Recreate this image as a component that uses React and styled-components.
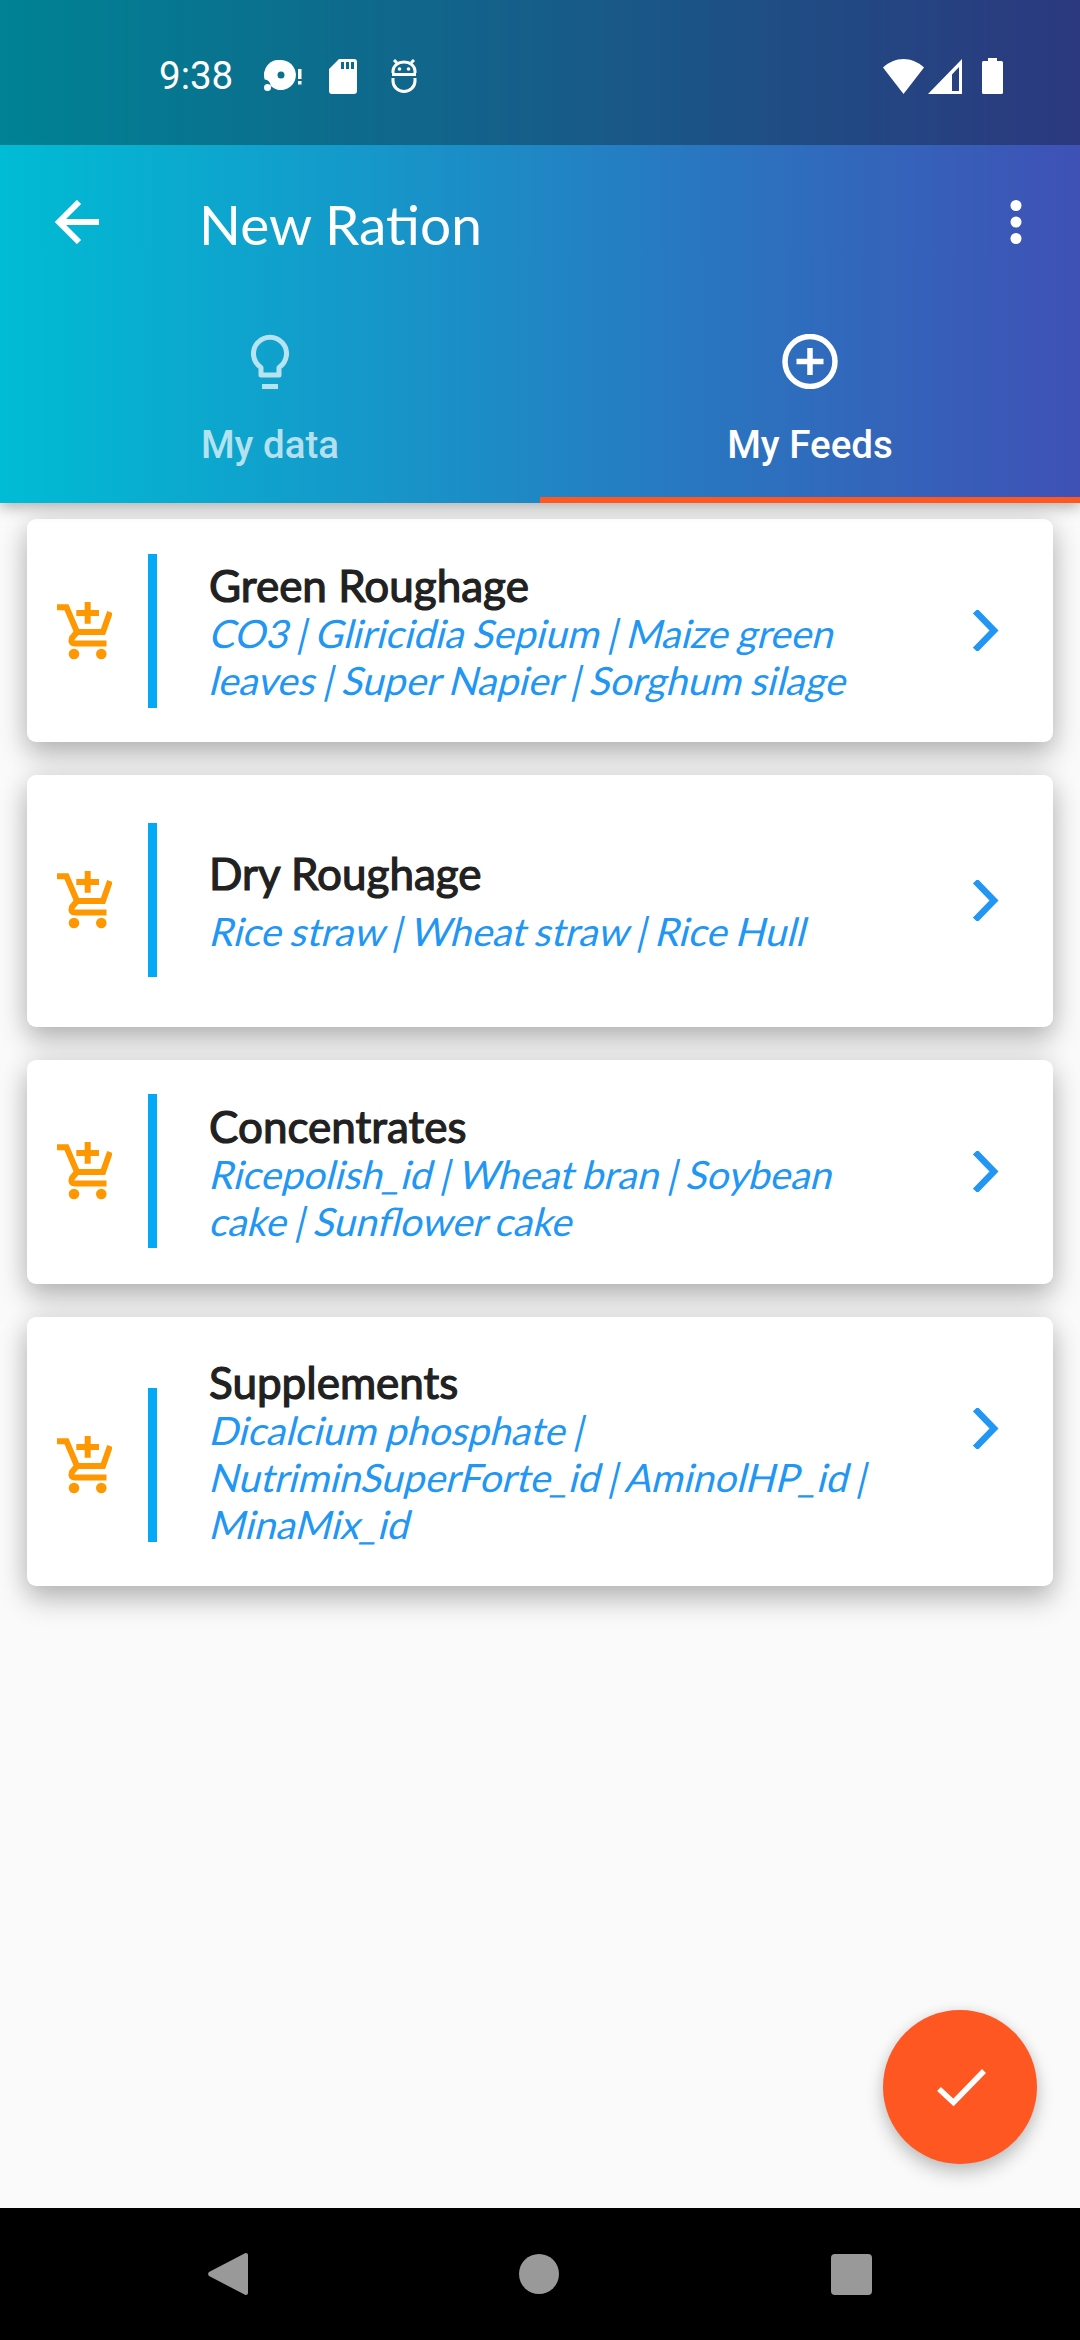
import React from "react";
import styled, { createGlobalStyle } from "styled-components";

const Global = createGlobalStyle`
  html, body { margin: 0; padding: 0; background: #fafafa; }
  * { box-sizing: border-box; }
`;

const Screen = styled.div`
  width: 1080px;
  height: 2340px;
  display: flex;
  flex-direction: column;
  overflow: hidden;
  background: #fafafa;
`;

const Header = styled.header`
  position: relative;
  z-index: 2;
  background: linear-gradient(90deg, #00bcd4 0%, #3f51b5 100%);
  box-shadow: 0 4px 14px rgba(0, 0, 0, 0.3);
  height: 503px;
  flex: none;
  display: flex;
  flex-direction: column;
`;

const StatusBar = styled.div`
  height: 145px;
  flex: none;
  background: rgba(0, 0, 0, 0.3);
  padding: 7px 0 0 159px;
  display: flex;
  align-items: center;
  color: #fff;
`;

const Clock = styled.span`
  font: 400 38.5px "Roboto", sans-serif;
  line-height: 1;
  margin-right: 31px;
`;

const StatusLeftIcons = styled.div`
  display: flex;
  align-items: center;
`;

const StatusRightIcons = styled.div`
  margin-left: auto;
  margin-right: 77px;
  display: flex;
  align-items: center;
`;

const Toolbar = styled.div`
  height: 154px;
  flex: none;
  display: flex;
  align-items: center;
  padding: 0 0 0 55px;
  color: #fff;
`;

const Title = styled.h1`
  margin: 0 0 0 100px;
  font: 400 55px "Lato", sans-serif;
  color: #fff;
  line-height: 1;
  position: relative;
  top: 2px;
`;

const More = styled.svg`
  margin-left: auto;
  margin-right: 58px;
`;

const Tabs = styled.div`
  flex: 1;
  display: flex;
`;

const Tab = styled.div`
  flex: 1;
  display: flex;
  flex-direction: column;
  align-items: center;
  padding-top: 35px;
  border-bottom: 6px solid ${(p) => (p.$active ? "#ff5722" : "transparent")};
  color: ${(p) => (p.$active ? "#ffffff" : "rgba(255,255,255,0.7)")};
`;

const TabLabel = styled.span`
  font: 500 38.5px "Roboto", sans-serif;
  line-height: 42px;
  margin-top: 35px;
`;

const List = styled.main`
  flex: 1;
  padding: 16px 27px 0 27px;
  display: flex;
  flex-direction: column;
  gap: 33px;
`;

const Card = styled.section`
  height: ${(p) => p.$h}px;
  background: #fff;
  border-radius: 9px;
  box-shadow: 0 14px 28px rgba(0, 0, 0, 0.24), 0 0 26px rgba(0, 0, 0, 0.1);
  display: flex;
  align-items: flex-start;
`;

const Lead = styled.div`
  width: 130px;
  flex: none;
  margin-top: ${(p) => p.$top}px;
  height: 154px;
  display: flex;
  align-items: center;
  justify-content: space-between;
  padding-left: 30px;
`;

const Bar = styled.div`
  width: 9px;
  height: 154px;
  background: #03a9f4;
`;

const Body = styled.div`
  width: 680px;
  margin: ${(p) => p.$top}px 0 0 52px;
  flex: none;
`;

const Name = styled.h2`
  margin: 0;
  font: 400 44px/49px "Lato", sans-serif;
  -webkit-text-stroke: 1.2px #212121;
  color: #212121;
`;

const Items = styled.p`
  margin: ${(p) => p.$gap || 0}px 0 0;
  font: 400 39px/47px "Lato", sans-serif;
  word-spacing: -1.5px;
  color: #2196f3;
`;

const ItemLine = styled.span`
  display: block;
  white-space: nowrap;
  transform: skewX(-14deg);
  transform-origin: 0 34px;
`;

const Chevron = styled.svg`
  margin: ${(p) => p.$top}px 0 0 auto;
  margin-right: 54px;
  flex: none;
`;

const Fab = styled.button`
  position: absolute;
  left: 883px;
  top: 2010px;
  width: 154px;
  height: 154px;
  border: 0;
  border-radius: 50%;
  background: #ff5722;
  box-shadow: 0 9px 18px rgba(0, 0, 0, 0.22), 0 0 12px rgba(0, 0, 0, 0.07);
  display: flex;
  align-items: center;
  justify-content: center;
  padding: 0;
`;

const NavBar = styled.nav`
  height: 132px;
  flex: none;
  background: #000;
  display: flex;
  align-items: center;
  justify-content: center;
  position: relative;
  z-index: 1;
`;

const NavGroup = styled.div`
  width: 664px;
  margin-left: -1px;
  display: flex;
  align-items: center;
  justify-content: space-between;
`;

const CartPlus = () => (
  <svg width="55" height="58" viewBox="0 0 55 58" fill="none">
    <path d="M0 5.300 H9.500 L20 30 H46 L53 10" stroke="#ff9800" strokeWidth="6" />
    <path d="M20 30 L15 36 Q13 41.500 18 41.500 H49.500" stroke="#ff9800" strokeWidth="6" />
    <path d="M30.700 0 V21.700 M19.300 11 H42" stroke="#ff9800" strokeWidth="6" />
    <circle cx="17" cy="52" r="5.300" fill="#ff9800" />
    <circle cx="44.300" cy="52" r="5.300" fill="#ff9800" />
  </svg>
);

const ChevronIcon = ({ top }) => (
  <Chevron $top={top} width="26" height="41" viewBox="0 0 26 41" fill="none">
    <path d="M4.500 3.500 L21 20.500 L4.500 37.500" stroke="#2196f3" strokeWidth="6.500" strokeLinecap="square" />
  </Chevron>
);

const cards = [
  { h: 223, name: "Green Roughage", lines: ["CO3 | Gliricidia Sepium | Maize green", "leaves | Super Napier | Sorghum silage"], lead: 35, body: 42, chev: 91, gap: 0 },
  { h: 252, name: "Dry Roughage", lines: ["Rice straw | Wheat straw | Rice Hull"], lead: 48, body: 74, chev: 105, gap: 10 },
  { h: 224, name: "Concentrates", lines: ["Ricepolish_id | Wheat bran | Soybean", "cake | Sunflower cake"], lead: 34, body: 42, chev: 91, gap: 0 },
  { h: 269, name: "Supplements", lines: ["Dicalcium phosphate |", "NutriminSuperForte_id | AminolHP_id |", "MinaMix_id"], lead: 71, body: 41, chev: 91, gap: 0 },
];

export default function App() {
  return (
    <Screen>
      <Global />
      <Header>
        <StatusBar>
          <Clock>9:38</Clock>
          <StatusLeftIcons>
            <svg width="38" height="32" viewBox="0 0 38 32" fill="#fff" style={{ marginRight: 27 }}>
              <path fillRule="evenodd" d="M17 0a15 15 0 1 1-10.500 25.800a6 6 0 0 0-5.800-6.300A15 15 0 0 1 17 0zm0 11.500a3.500 3.500 0 1 0 0 7a3.500 3.500 0 0 0 0-7z" />
              <circle cx="3.500" cy="27.500" r="3.500" />
              <rect x="34" y="9" width="3.500" height="10" />
              <rect x="34" y="21" width="3.500" height="3.500" />
            </svg>
            <svg width="28" height="35" viewBox="0 0 28 35" fill="#fff" style={{ marginRight: 34 }}>
              <path fillRule="evenodd" d="M10 0H25a3 3 0 0 1 3 3V32a3 3 0 0 1-3 3H3a3 3 0 0 1-3-3V10zM12 3V10H15V3zM17 3V10H20V3zM22 3V10H25V3z" />
            </svg>
            <svg width="26" height="34" viewBox="0 0 26 34" fill="none" stroke="#fff" strokeWidth="3">
              <path d="M2 14V12a11 9 0 0 1 22 0v2M1 15.500H25M2 19v3a11 10.500 0 0 0 22 0v-3" />
              <circle cx="8.500" cy="10" r="1.800" fill="#fff" stroke="none" />
              <circle cx="17.500" cy="10" r="1.800" fill="#fff" stroke="none" />
              <path d="M3 1l3 3M23 1l-3 3" />
            </svg>
          </StatusLeftIcons>
          <StatusRightIcons>
            <svg width="41" height="35" viewBox="0 0 41 35" fill="#fff" style={{ marginRight: 4 }}>
              <path d="M0 8.500C6 3 13 0 20.500 0S35 3 41 8.500L20.500 35z" />
            </svg>
            <svg width="34" height="35" viewBox="0 0 34 35" fill="#fff" style={{ marginRight: 20 }}>
              <path fillRule="evenodd" d="M34 0V35H0zM31 8L24 15.500V32H31z" />
            </svg>
            <svg width="21" height="36" viewBox="0 0 21 36" fill="#fff">
              <path d="M6 0H15V3H19.500a1.500 1.500 0 0 1 1.500 1.500V34.500a1.500 1.500 0 0 1-1.500 1.500H1.500A1.500 1.500 0 0 1 0 34.500V4.500A1.500 1.500 0 0 1 1.500 3H6z" />
            </svg>
          </StatusRightIcons>
        </StatusBar>
        <Toolbar>
          <svg width="44" height="44" viewBox="0 0 44 44" fill="none" stroke="#fff" strokeWidth="6">
            <path d="M44 22H5M24 2L4 22L24 42" />
          </svg>
          <Title>New Ration</Title>
          <More width="12" height="44" viewBox="0 0 12 44" fill="#fff">
            <circle cx="6" cy="5.500" r="5.500" />
            <circle cx="6" cy="22" r="5.500" />
            <circle cx="6" cy="38.500" r="5.500" />
          </More>
        </Toolbar>
        <Tabs>
          <Tab>
            <svg width="38" height="55" viewBox="0 0 38 55" fill="none" stroke="currentColor" strokeWidth="5">
              <path d="M10 41V33.500A16.500 16.500 0 1 1 28 33.500V41Z" strokeLinejoin="round" />
              <path d="M11 52.500H27" />
            </svg>
            <TabLabel>My data</TabLabel>
          </Tab>
          <Tab $active>
            <svg width="56" height="55" viewBox="0 0 56 55" fill="none" stroke="currentColor" strokeWidth="5.500">
              <circle cx="28" cy="27.500" r="25" />
              <path d="M28 14V41M14.500 27.500H41.500" />
            </svg>
            <TabLabel>My Feeds</TabLabel>
          </Tab>
        </Tabs>
      </Header>
      <List>
        {cards.map((c) => (
          <Card key={c.name} $h={c.h}>
            <Lead $top={c.lead}>
              <CartPlus />
              <Bar />
            </Lead>
            <Body $top={c.body}>
              <Name>{c.name}</Name>
              <Items $gap={c.gap}>
                {c.lines.map((l) => (
                  <ItemLine key={l}>{l}</ItemLine>
                ))}
              </Items>
            </Body>
            <ChevronIcon top={c.chev} />
          </Card>
        ))}
      </List>
      <Fab aria-label="Done">
        <svg width="54" height="42" viewBox="0 0 54 42" fill="none" stroke="#fff" strokeWidth="5.500">
          <path d="M6 23L20.500 36.500L51 5" />
        </svg>
      </Fab>
      <NavBar>
        <NavGroup>
          <svg width="40" height="44" viewBox="0 0 40 44" fill="#999">
            <path d="M38 1a2 2 0 0 1 2 2V41a2 2 0 0 1-2 2a2 2 0 0 1-1.500-.500L1 24a3 3 0 0 1 0-4L36.500 1.500A2 2 0 0 1 38 1z" />
          </svg>
          <svg width="40" height="40" viewBox="0 0 40 40" fill="#999">
            <circle cx="20" cy="20" r="20" />
          </svg>
          <svg width="41" height="41" viewBox="0 0 41 41" fill="#999">
            <rect width="41" height="41" rx="4" />
          </svg>
        </NavGroup>
      </NavBar>
    </Screen>
  );
}
